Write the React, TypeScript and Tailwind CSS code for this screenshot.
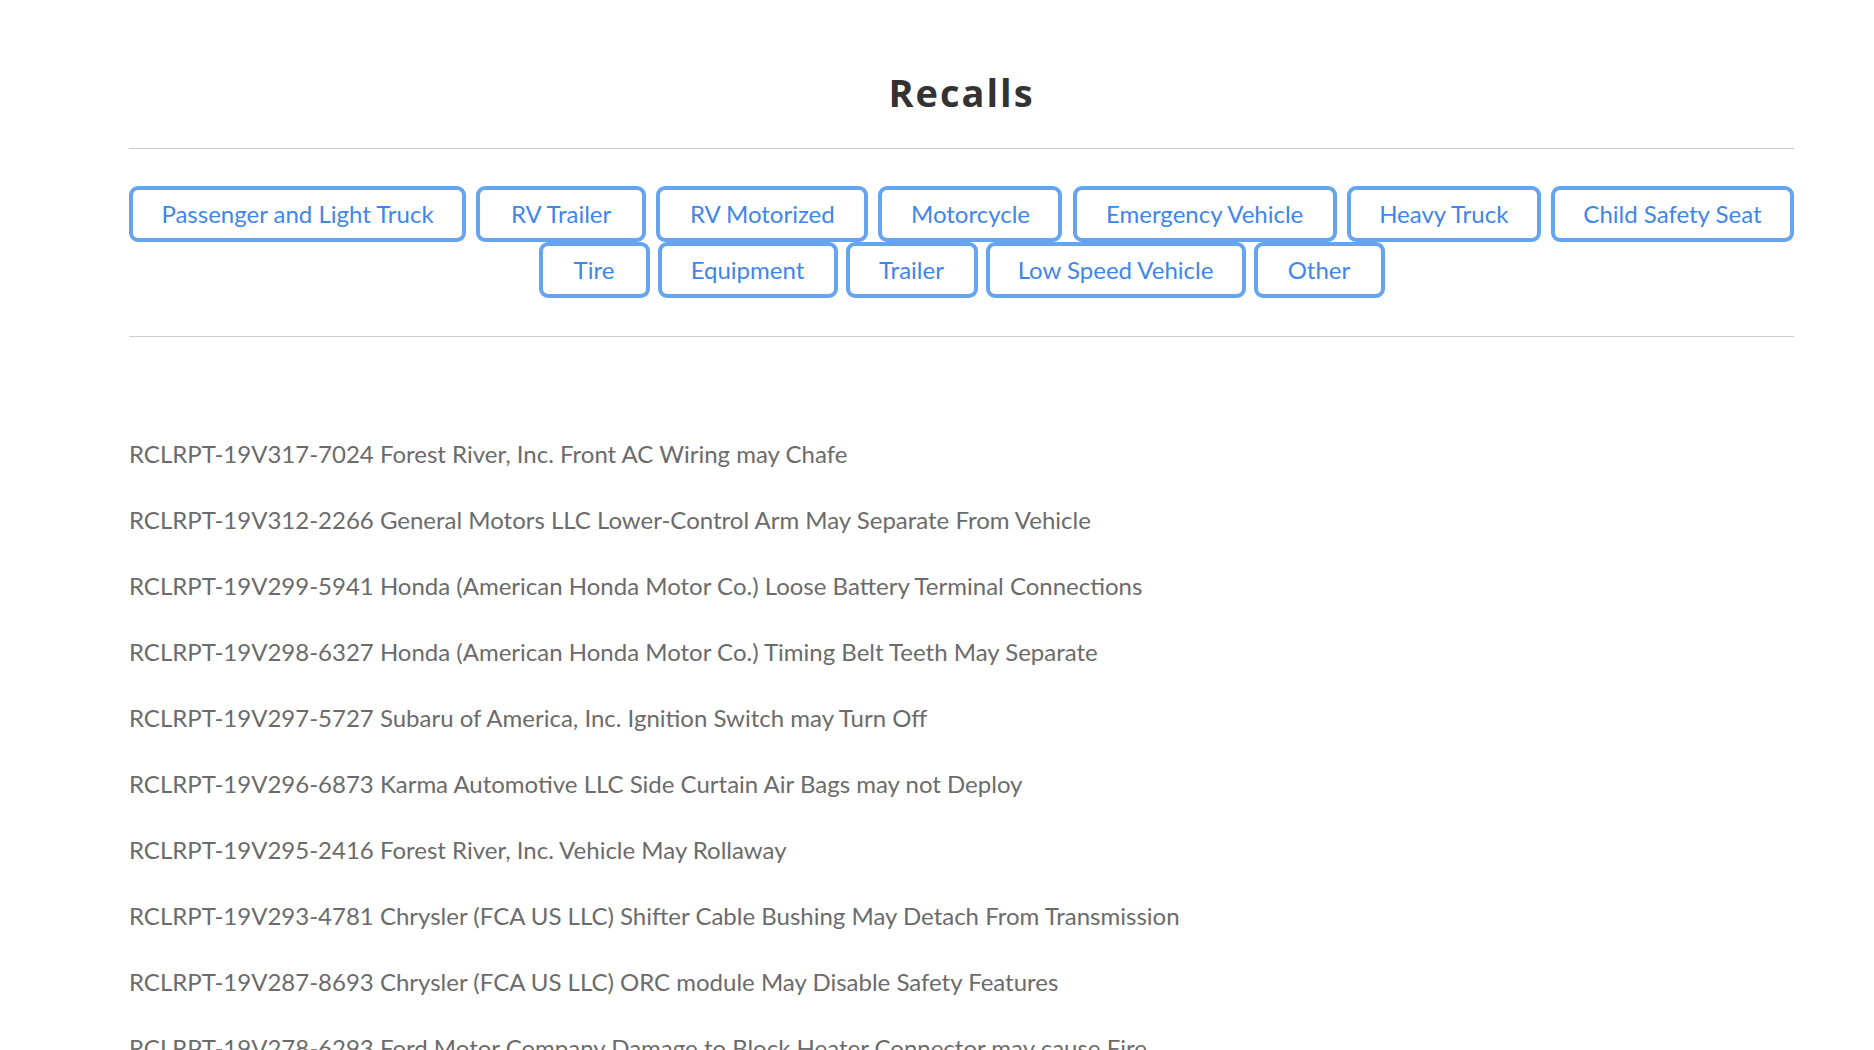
import * as React from 'react';

// Category filters, split in the two rows the page shows
const topRow = [
  { label: 'Passenger and Light Truck', w: 'w-[337px]' },
  { label: 'RV Trailer', w: 'w-[170px]' },
  { label: 'RV Motorized', w: 'w-[212px]' },
  { label: 'Motorcycle', w: 'w-[184px]' },
  { label: 'Emergency Vehicle', w: 'w-[264px]' },
  { label: 'Heavy Truck', w: 'w-[194px]' },
  { label: 'Child Safety Seat', w: 'w-[243px]' },
];

const bottomRow = [
  { label: 'Tire', w: 'w-[111px]' },
  { label: 'Equipment', w: 'w-[180px]' },
  { label: 'Trailer', w: 'w-[132px]' },
  { label: 'Low Speed Vehicle', w: 'w-[260px]' },
  { label: 'Other', w: 'w-[131px]' },
];

const recalls = [
  'RCLRPT-19V317-7024 Forest River, Inc. Front AC Wiring may Chafe',
  'RCLRPT-19V312-2266 General Motors LLC Lower-Control Arm May Separate From Vehicle',
  'RCLRPT-19V299-5941 Honda (American Honda Motor Co.) Loose Battery Terminal Connections',
  'RCLRPT-19V298-6327 Honda (American Honda Motor Co.) Timing Belt Teeth May Separate',
  'RCLRPT-19V297-5727 Subaru of America, Inc. Ignition Switch may Turn Off',
  'RCLRPT-19V296-6873 Karma Automotive LLC Side Curtain Air Bags may not Deploy',
  'RCLRPT-19V295-2416 Forest River, Inc. Vehicle May Rollaway',
  'RCLRPT-19V293-4781 Chrysler (FCA US LLC) Shifter Cable Bushing May Detach From Transmission',
  'RCLRPT-19V287-8693 Chrysler (FCA US LLC) ORC module May Disable Safety Features',
  'RCLRPT-19V278-6293 Ford Motor Company Damage to Block Heater Connector may cause Fire',
];

const CategoryButton: React.FC<{ label: string; w: string }> = ({ label, w }) => (
  <button
    className={`${w} h-[56px] rounded-[9px] border-4 border-[#65a5ef] bg-white text-[24px] text-[#3f86ea] flex items-center justify-center`}
  >
    {label}
  </button>
);

export default function App() {
  return (
    <div
      className="min-h-screen bg-white pl-[129px] pr-[80px]"
      style={{ fontFamily: 'Lato, "Open Sans", sans-serif' }}
    >
      {/* Title */}
      <h1
        className="pt-[69px] pb-[33px] text-center text-[38px] leading-[46px] font-bold tracking-[2px] text-[#333333]"
        style={{ fontFamily: '"Open Sans", sans-serif' }}
      >
        Recalls
      </h1>
      <hr className="border-0 border-t border-[#c8c8c8]" />

      {/* Filters */}
      <div className="pt-[37px] pb-[38px] flex flex-col">
        <div className="flex justify-between">
          {topRow.map((c) => (
            <CategoryButton key={c.label} label={c.label} w={c.w} />
          ))}
        </div>
        <div className="flex justify-center gap-2">
          {bottomRow.map((c) => (
            <CategoryButton key={c.label} label={c.label} w={c.w} />
          ))}
        </div>
      </div>
      <hr className="border-0 border-t border-[#cfcfcf]" />

      {/* Recall list */}
      <ul className="pt-[84px]">
        {recalls.map((r) => (
          <li key={r} className="text-[24px] leading-[66px] text-[#6b6b6b]">
            {r}
          </li>
        ))}
      </ul>
    </div>
  );
}
